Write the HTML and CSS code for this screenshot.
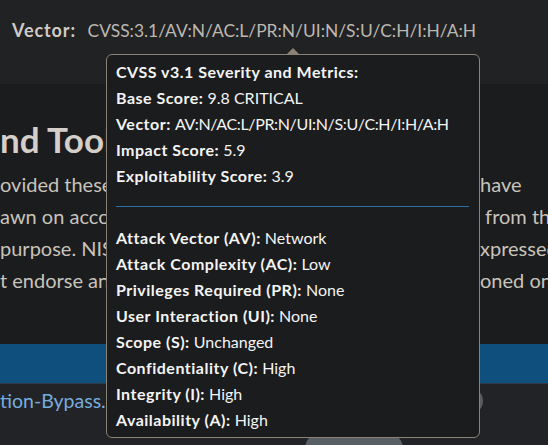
FILE: index.html
```html
<!DOCTYPE html>
<html lang="en">
<head>
<meta charset="utf-8">
<title>CVSS Vector</title>
<link rel="stylesheet" href="styles.css">
</head>
<body>
<header class="vector-bar">
  <span class="vector-label">Vector:</span>
  <span class="vector-value">CVSS:3.1/AV:N/AC:L/PR:N/UI:N/S:U/C:H/I:H/A:H</span>
</header>

<main class="content">
  <h3 class="section-title">nd Tools</h3>
  <div class="para">
    <div class="para-line"><span>ovided these links to other web sites because they may</span><span class="tail">have</span></div>
    <div class="para-line"><span>awn on account of other sites being referenced, or not,</span><span class="tail">&nbsp;from this page.</span></div>
    <div class="para-line"><span>purpose. NIST does not necessarily endorse the views e</span><span class="tail">xpressed, or</span></div>
    <div class="para-line"><span>t endorse any commercial products that may be menti</span><span class="tail">oned on these</span></div>
  </div>
</main>

<div class="table-head"></div>
<div class="table-body">
  <div class="ref-link">tion-Bypass.html</div>
  <span class="circle-btn"></span>
  <span class="pill-btn"></span>
</div>

<div class="tooltip">
  <div class="tip-line"><b>CVSS v3.1 Severity and Metrics:</b></div>
  <div class="tip-line"><b>Base Score:</b> 9.8 CRITICAL</div>
  <div class="tip-line"><b>Vector:</b> <span class="tip-vector">AV:N/AC:L/PR:N/UI:N/S:U/C:H/I:H/A:H</span></div>
  <div class="tip-line"><b>Impact Score:</b> 5.9</div>
  <div class="tip-line"><b>Exploitability Score:</b> 3.9</div>
  <hr class="tip-rule">
  <div class="tip-line"><b>Attack Vector (AV):</b> Network</div>
  <div class="tip-line"><b>Attack Complexity (AC):</b> Low</div>
  <div class="tip-line"><b>Privileges Required (PR):</b> None</div>
  <div class="tip-line"><b>User Interaction (UI):</b> None</div>
  <div class="tip-line"><b>Scope (S):</b> Unchanged</div>
  <div class="tip-line"><b>Confidentiality (C):</b> High</div>
  <div class="tip-line"><b>Integrity (I):</b> High</div>
  <div class="tip-line"><b>Availability (A):</b> High</div>
</div>
</body>
</html>
```

FILE: styles.css
```css
html, body {
  margin: 0;
  padding: 0;
}

body {
  width: 548px;
  height: 445px;
  overflow: hidden;
  position: relative;
  background: #1b1c1e;
  font-family: Lato, "Liberation Sans", sans-serif;
  color: #c8c3bb;
}

.vector-bar {
  height: 84px;
  box-sizing: border-box;
  background: #212224;
  padding: 19px 0 0 12px;
  font-size: 18px;
  line-height: 22px;
  white-space: nowrap;
}

.vector-label {
  font-weight: 700;
  color: #d0cbc4;
  letter-spacing: 0.9px;
  margin-right: 7px;
}

.vector-value {
  font-size: 17.4px;
  color: #bcb7b0;
}

.content {
  padding-top: 34px;
  height: 260px;
  box-sizing: border-box;
}

.section-title {
  margin: 0;
  font-size: 35px;
  line-height: 42px;
  font-weight: 700;
  color: #d4cfc8;
  white-space: nowrap;
}

.para {
  margin-top: 8px;
  font-size: 20px;
  line-height: 32px;
}

.para-line {
  display: grid;
  grid-template-columns: 480px 1fr;
  white-space: nowrap;
  overflow: hidden;
}

.para-line span {
  overflow: hidden;
}

.table-head {
  height: 39px;
  background: #0f4f7d;
  border-bottom: 1px solid #2b3a46;
}

.table-body {
  position: relative;
  height: 62px;
  background: #222326;
  padding-top: 1px;
}

.ref-link {
  font-size: 19.5px;
  line-height: 32px;
  color: #77acdf;
  white-space: nowrap;
}

.circle-btn {
  position: absolute;
  left: 457px;
  top: 4px;
  width: 26px;
  height: 26px;
  border-radius: 50%;
  background: #5a5b5e;
}

.pill-btn {
  position: absolute;
  left: 305px;
  top: 50px;
  width: 98px;
  height: 30px;
  border-radius: 14px;
  background: #596065;
}

.tooltip {
  position: absolute;
  left: 106px;
  top: 54px;
  width: 374px;
  height: 384px;
  box-sizing: border-box;
  border: 1px solid #8c8175;
  border-radius: 6px;
  background: #1b1c1e;
  padding: 4px 10px 0 9px;
  color: #f4f4f4;
  font-size: 16px;
  line-height: 26px;
  z-index: 2;
}

.tooltip::before {
  content: "";
  position: absolute;
  left: 180px;
  top: -7px;
  border-left: 6px solid transparent;
  border-right: 6px solid transparent;
  border-bottom: 6px solid #8c8175;
}

.tip-line {
  white-space: nowrap;
}

.tip-line b {
  font-weight: 700;
  letter-spacing: 0.5px;
}

.tip-vector {
  letter-spacing: -0.35px;
}

.tip-rule {
  border: 0;
  border-top: 1px solid #2d6fa4;
  margin: 17px 0 18px 0;
}
```
